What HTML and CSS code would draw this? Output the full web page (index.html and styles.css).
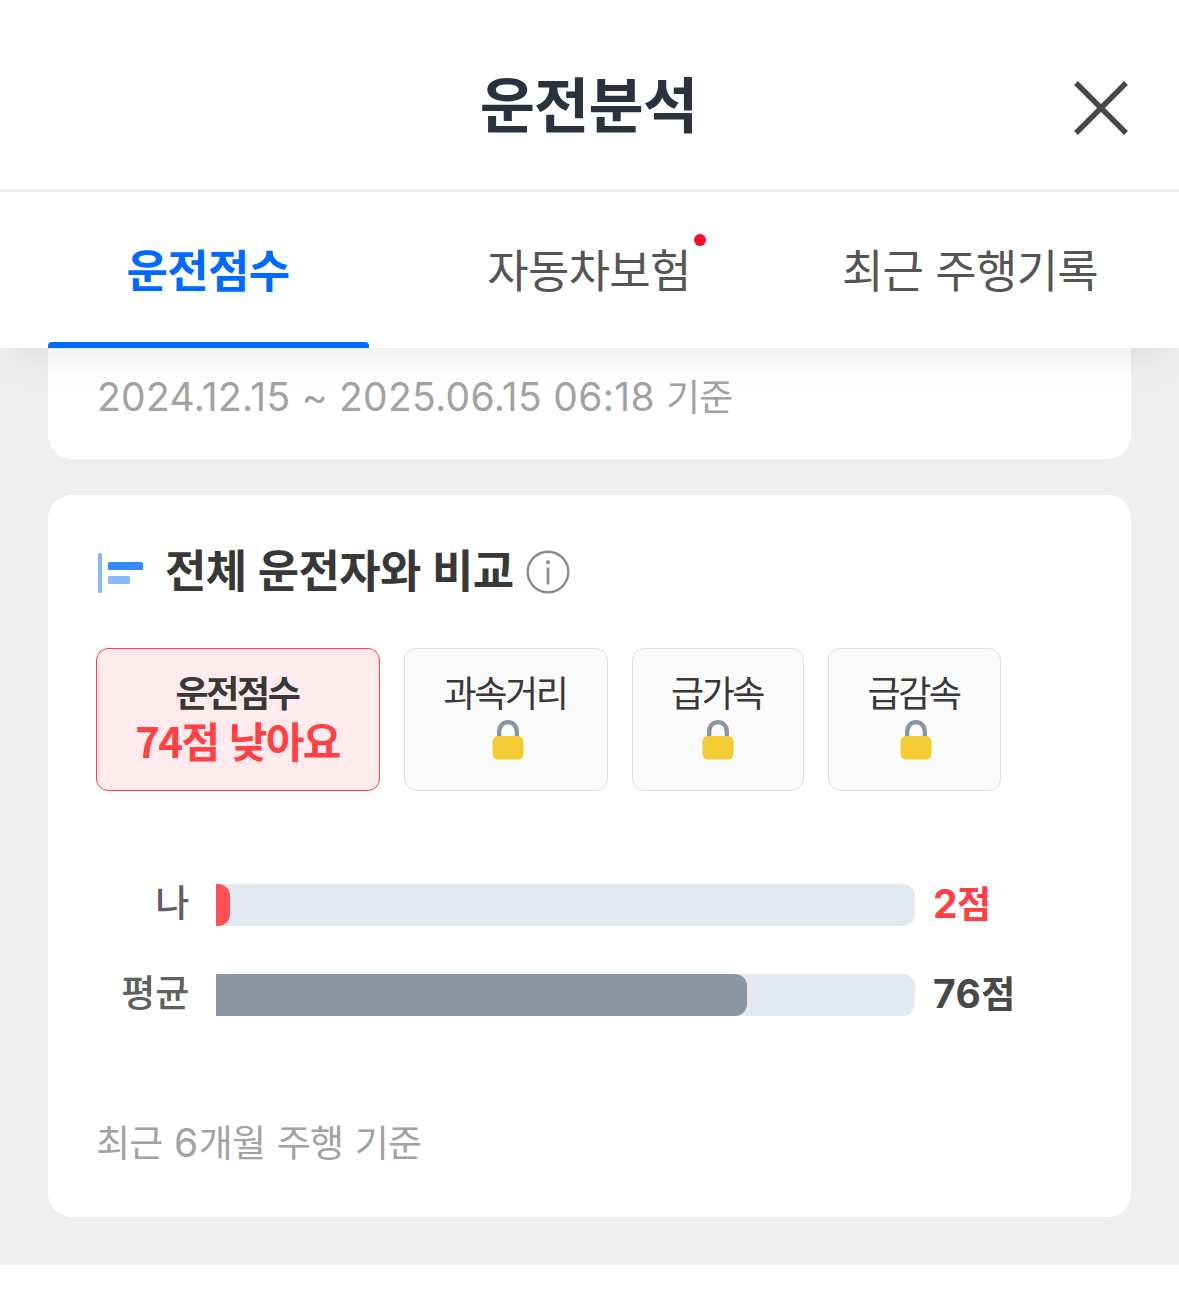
FILE: index.html
```html
<!DOCTYPE html>
<html lang="ko">
<head>
<meta charset="utf-8">
<title>운전분석</title>
<link rel="stylesheet" href="styles.css">
</head>
<body>
<header class="top">
  <div class="titlebar">
    <h1 class="title">운전분석</h1>
    <button class="close" aria-label="닫기">
      <svg width="54" height="54" viewBox="0 0 54 54"><path d="M2 2 52 52M52 2 2 52" stroke="#484848" stroke-width="5.4" fill="none"/></svg>
    </button>
  </div>
  <nav class="tabs">
    <a class="tab tab-active"><span class="tab-label">운전점수</span></a>
    <a class="tab"><span class="tab-label">자동차보험<i class="dot"></i></span></a>
    <a class="tab"><span class="tab-label">최근 주행기록</span></a>
  </nav>
</header>
<main class="content">
  <section class="card card-period">
    <p class="note period">2024.12.15 ~ 2025.06.15 06:18 <span class="ko">기준</span></p>
  </section>
  <section class="card card-compare">
    <div class="heading">
      <svg class="chart-icon" width="46" height="40" viewBox="0 0 46 40"><rect width="4" height="40" rx="1.5" fill="#86b7ff"/><rect x="10" y="9" width="35" height="8" rx="1.5" fill="#368aff"/><rect x="10" y="23" width="22" height="8" rx="1.5" fill="#86b7ff"/></svg>
      <h2 class="heading-text">전체 운전자와 비교</h2>
      <svg class="info-icon" width="44" height="44" viewBox="0 0 44 44"><circle cx="22" cy="22" r="20.3" fill="none" stroke="#8c8c8c" stroke-width="2.4"/><circle cx="22" cy="12.3" r="2" fill="#8c8c8c"/><path d="M22 17.5v17" stroke="#8c8c8c" stroke-width="2.8"/></svg>
    </div>
    <div class="chips">
      <button class="chip chip-active"><span class="chip-name">운전점수</span><span class="chip-value">74점 낮아요</span></button>
      <button class="chip chip-distance"><span class="chip-name">과속거리</span>
        <svg class="lock" width="32" height="40" viewBox="0 0 32 40"><path d="M7.2 17V11a8.8 8.8 0 0 1 17.6 0V17" fill="none" stroke="#8995a3" stroke-width="4.3"/><rect x=".5" y="16" width="31" height="23.6" rx="5.5" fill="#f3cb32"/></svg></button>
      <button class="chip chip-accel"><span class="chip-name">급가속</span>
        <svg class="lock" width="32" height="40" viewBox="0 0 32 40"><path d="M7.2 17V11a8.8 8.8 0 0 1 17.6 0V17" fill="none" stroke="#8995a3" stroke-width="4.3"/><rect x=".5" y="16" width="31" height="23.6" rx="5.5" fill="#f3cb32"/></svg></button>
      <button class="chip chip-brake"><span class="chip-name">급감속</span>
        <svg class="lock" width="32" height="40" viewBox="0 0 32 40"><path d="M7.2 17V11a8.8 8.8 0 0 1 17.6 0V17" fill="none" stroke="#8995a3" stroke-width="4.3"/><rect x=".5" y="16" width="31" height="23.6" rx="5.5" fill="#f3cb32"/></svg></button>
    </div>
    <div class="bars">
      <div class="bar-row"><span class="bar-label">나</span><div class="track"><div class="fill fill-me" style="width:2%"></div></div><strong class="score score-me">2<span class="ko">점</span></strong></div>
      <div class="bar-row"><span class="bar-label">평균</span><div class="track"><div class="fill" style="width:76%"></div></div><strong class="score">76<span class="ko">점</span></strong></div>
    </div>
    <p class="note basis"><span class="ko">최근</span> 6<span class="ko">개월</span> <span class="ko">주행</span> <span class="ko">기준</span></p>
  </section>
</main>
</body>
</html>
```
FILE: styles.css
```css
* { box-sizing: border-box; margin: 0; padding: 0; }
body {
  background: #fff;
  font-family: Inter, "Noto Sans CJK KR", sans-serif;
  color: #383838;
  white-space: nowrap;
}
button { border: 0; background: none; font: inherit; color: inherit; }
svg { display: block; flex: none; }

.top {
  position: relative;
  z-index: 1;
  height: 348px;
  background: #fff;
  box-shadow: 0 24px 36px -15px rgba(0, 0, 0, .08);
}
.titlebar {
  display: grid;
  grid-template-columns: 1fr auto 1fr;
  align-items: center;
  height: 192px;
  padding: 23px 51px 0;
  border-bottom: 3px solid #efefef;
}
.title {
  grid-column: 2;
  margin-right: 2px;
  font-size: 60px;
  font-weight: 700;
  line-height: 72px;
  letter-spacing: -.8px;
  color: #2b323d;
}
.close { justify-self: end; margin-top: 4px; }
.tabs {
  display: grid;
  grid-template-columns: repeat(3, 1fr);
  gap: 60px;
  height: 156px;
  padding: 0 48px;
}
.tab {
  display: grid;
  grid-template-rows: 150px 6px;
  justify-items: center;
  align-items: center;
  font-size: 45px;
  letter-spacing: -.7px;
  color: #555;
}
.tab-active { font-weight: 700; color: #006aff; }
.tab-active::after {
  content: "";
  width: 100%;
  height: 6px;
  border-radius: 4px 4px 0 0;
  background: #006aff;
}
.tab-label { position: relative; margin: 9px 1px 0 0; line-height: 60px; }
.dot {
  position: absolute;
  top: -8px;
  right: -15px;
  width: 12px;
  height: 12px;
  border-radius: 50%;
  background: #fa1026;
}

.content { height: 917px; padding: 0 48px; background: #efefef; }
.card { background: #fff; }
.card-period {
  height: 111px;
  margin-bottom: 36px;
  padding: 23px 48px;
  border-radius: 0 0 24px 24px;
}
.card-compare { height: 722px; padding: 48px; border-radius: 24px; }
.note { font-size: 39px; line-height: 51px; letter-spacing: .55px; color: #a2a2a2; }
.period { padding-left: 1px; letter-spacing: .3px; }
.ko { font-size: 37px; letter-spacing: -.8px; }

.heading { display: flex; align-items: center; height: 58px; padding-left: 2px; }
.chart-icon { margin-top: 2px; }
.heading-text {
  margin: 0 12px 0 21px;
  font-size: 45px;
  font-weight: 700;
  line-height: 60px;
  letter-spacing: -.7px;
  word-spacing: 1.5px;
}

.chips { display: flex; gap: 24px; margin-top: 47px; }
.chip {
  display: flex;
  flex-direction: column;
  align-items: center;
  height: 143px;
  padding-top: 23px;
  border: 1px solid #dfdfdf;
  border-radius: 12px;
  background: #fafafa;
}
.chip-active { width: 284px; border-color: #ff4044; background: #ffebed; }
.chip-distance { width: 204px; }
.chip-accel { width: 172px; }
.chip-brake { width: 173px; }
.chip-name {
  margin-right: 2px;
  font-size: 36px;
  line-height: 44px;
  letter-spacing: -2.4px;
}
.chip-active .chip-name { font-weight: 700; }
.chip-value {
  margin: 0 1px 0 0;
  font-family: "Noto Sans CJK KR", sans-serif;
  font-size: 42px;
  font-weight: 700;
  line-height: 48px;
  letter-spacing: -1.6px;
  color: #ff4044;
}
.lock { margin: 4px 0 0 4px; }
.chip-accel .lock { margin-left: 0; }
.chip-brake .lock { margin-left: 3px; }

.bars { display: grid; gap: 48px; margin-top: 93px; }
.bar-row {
  display: grid;
  grid-template-columns: 92px 699px auto;
  column-gap: 28px;
  align-items: center;
  height: 42px;
  font-size: 39px;
  line-height: 40px;
}
.bar-label {
  margin: -2px -1px 0 0;
  text-align: right;
  font-size: 37px;
  font-weight: 500;
  letter-spacing: -.2px;
  color: #606060;
}
.track { height: 42px; border-radius: 0 12px 12px 0; background: #e4e9f1; }
.fill { height: 42px; border-radius: 0 12px 12px 0; background: #8c96a3; }
.fill-me { background: #ff5155; }
.score { margin: -1px 0 0 -10px; letter-spacing: .4px; color: #484848; }
.score-me { color: #ff4044; letter-spacing: -.6px; }
.basis { margin-top: 101px; }
```
